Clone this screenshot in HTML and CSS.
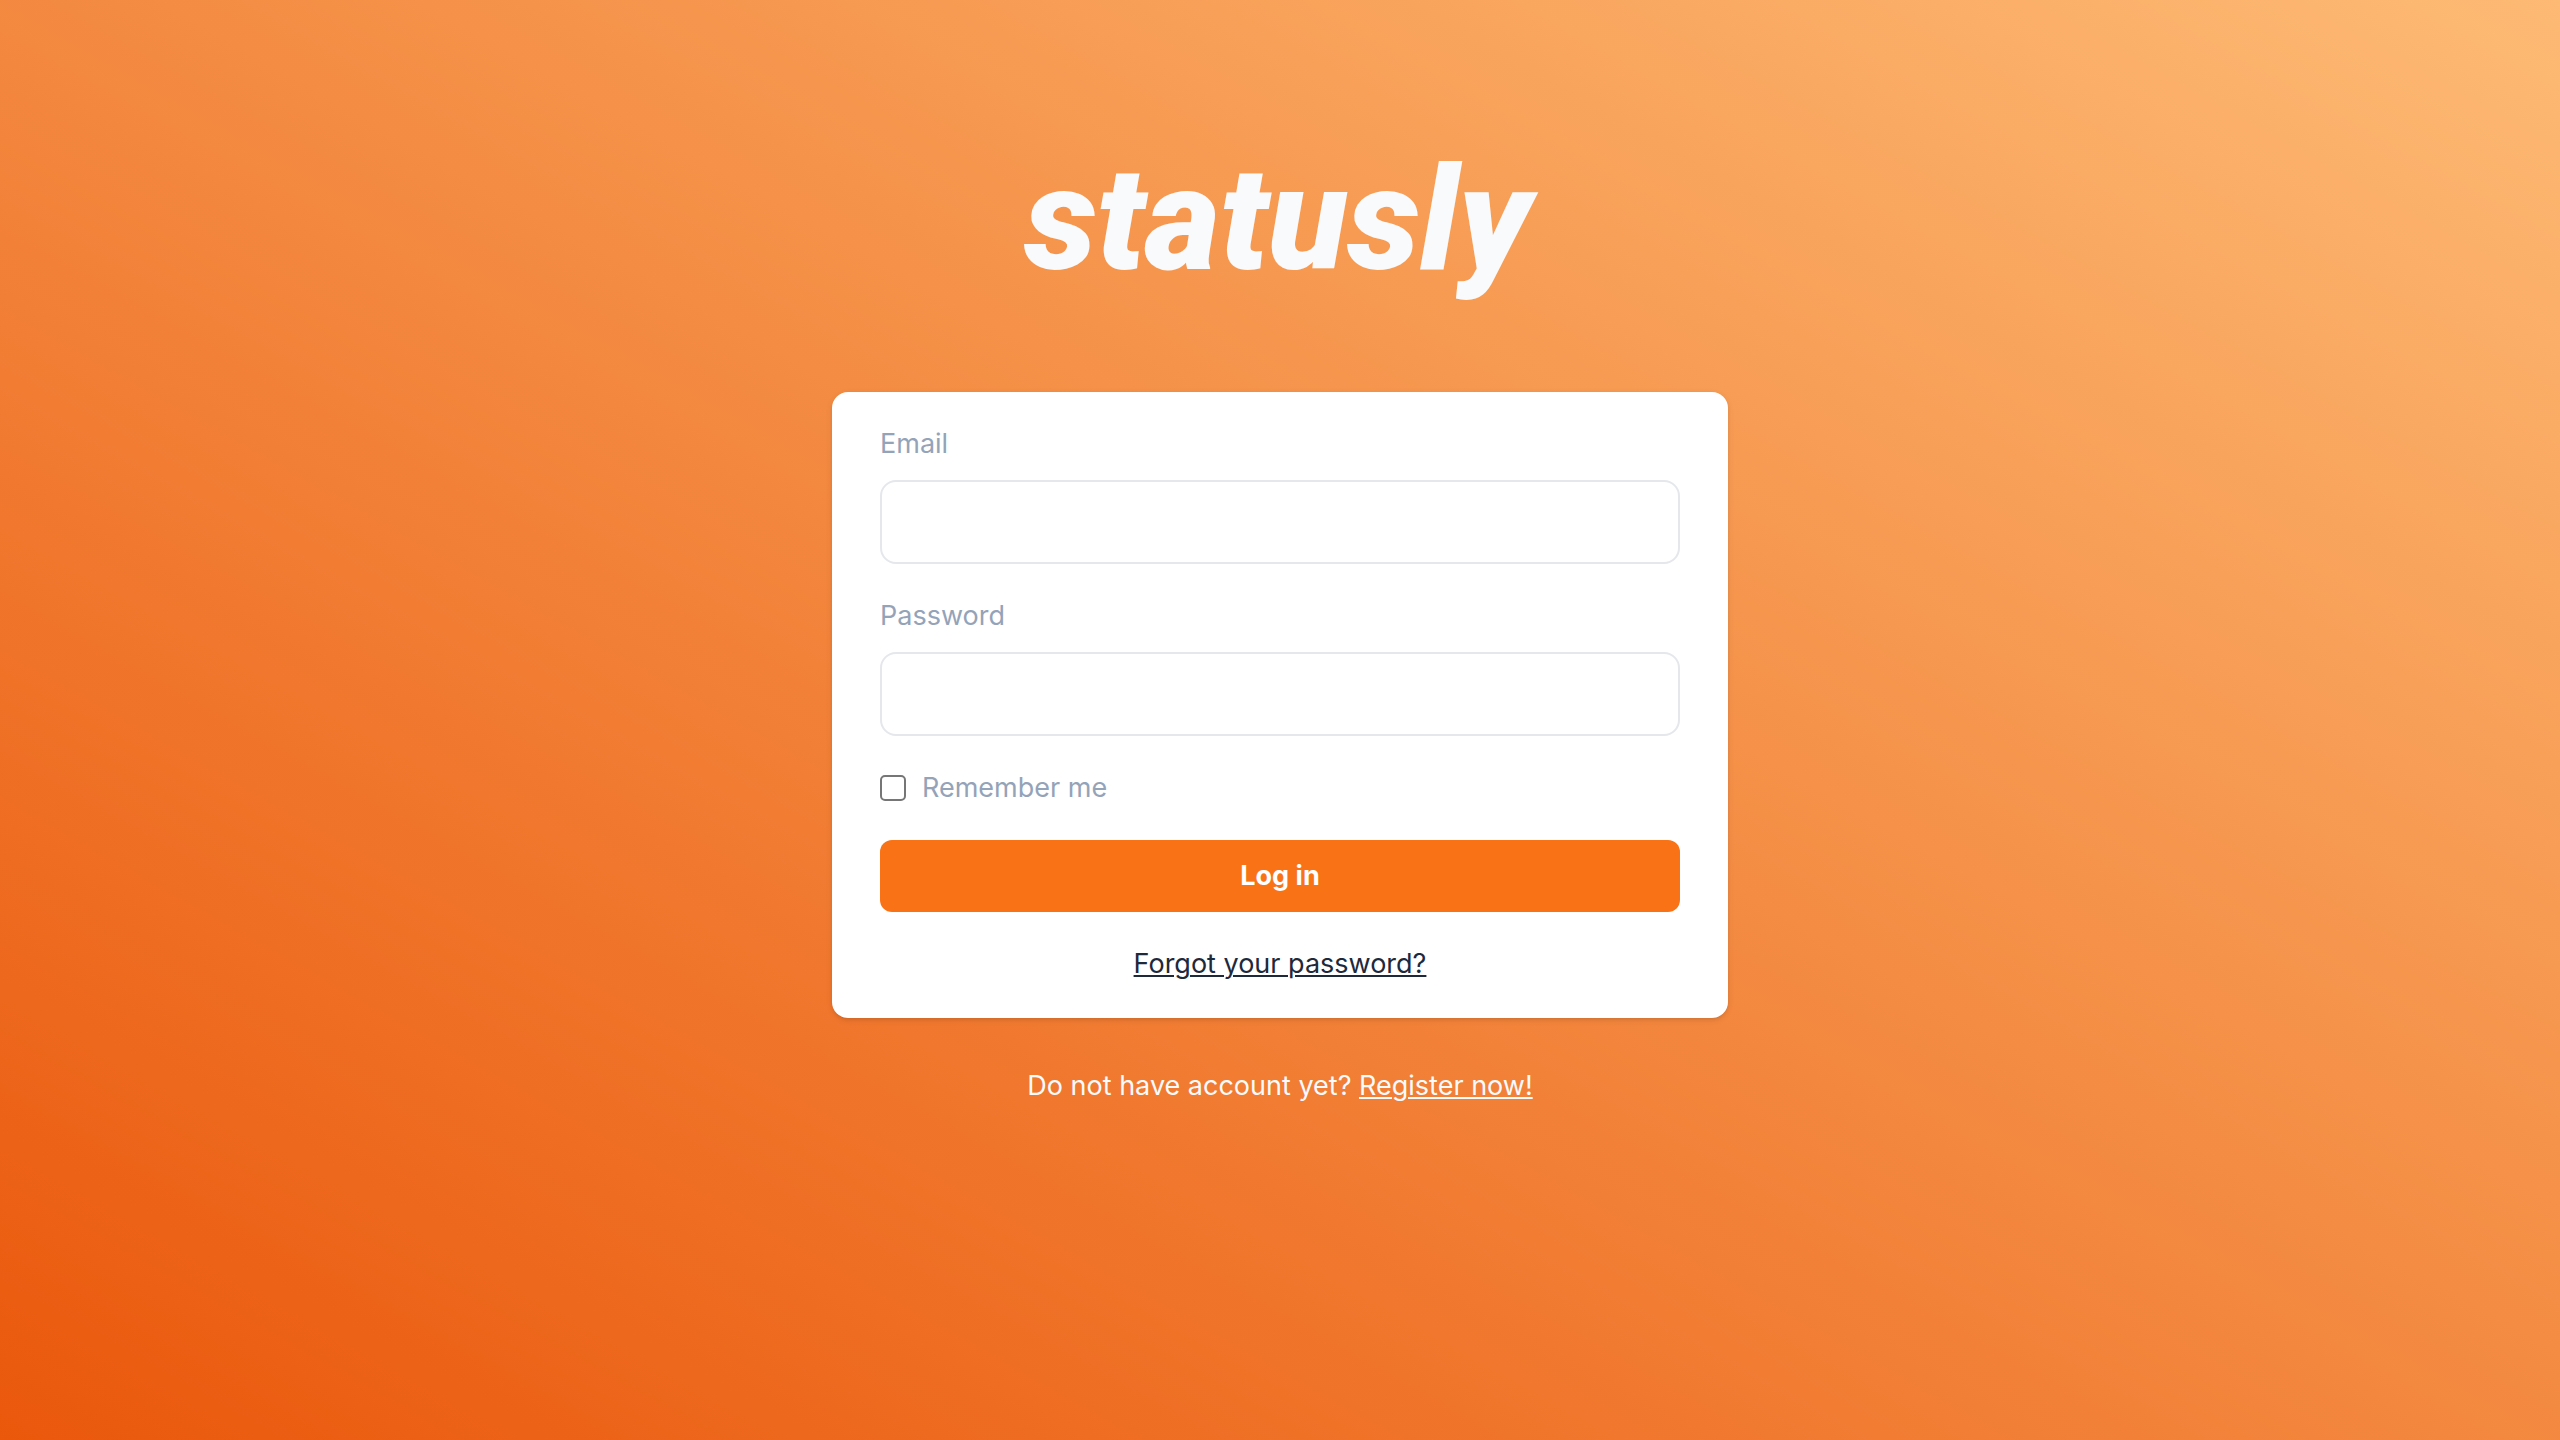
FILE: index.html
```html
<!DOCTYPE html>
<html lang="en">
<head>
  <meta charset="utf-8">
  <meta name="viewport" content="width=device-width, initial-scale=1">
  <title>Log in - statusly</title>
  <link rel="stylesheet" href="styles.css">
</head>
<body>
  <main class="page">
    <svg class="logo" viewBox="0 0 520 140" role="img" aria-label="statusly">
      <text class="logo-text" x="258" y="109" text-anchor="middle">statusly</text>
    </svg>

    <form class="card">
      <div class="field">
        <label for="email">Email</label>
        <input class="input" id="email" name="email" type="email">
      </div>
      <div class="field">
        <label for="password">Password</label>
        <input class="input" id="password" name="password" type="password">
      </div>
      <div class="remember">
        <input class="checkbox" id="remember" name="remember" type="checkbox">
        <label for="remember">Remember me</label>
      </div>
      <button class="button" type="submit">Log in</button>
      <a class="forgot" href="#forgot">Forgot your password?</a>
    </form>

    <p class="register">Do not have account yet? <a href="#register">Register now!</a></p>
  </main>
</body>
</html>
```

FILE: styles.css
```css
* {
  box-sizing: border-box;
}

body {
  margin: 0;
  font-family: Inter, "Liberation Sans", sans-serif;
  font-size: 27px;
  line-height: 40px;
}

.page {
  display: flex;
  flex-direction: column;
  align-items: center;
  min-height: 100vh;
  padding: 160px 32px 48px;
  background: linear-gradient(to top right, #ea580c, #fdba74);
}

.logo {
  width: 520px;
  max-width: 100%;
  margin-bottom: 92px;
  overflow: visible;
}

.logo-text {
  font-family: Roboto, "Liberation Sans", sans-serif;
  font-size: 145px;
  font-style: italic;
  font-weight: 900;
  fill: #f8fafc;
}

.card {
  display: flex;
  flex-direction: column;
  gap: 32px;
  width: 100%;
  max-width: 896px;
  padding: 32px 48px 34px;
  border-radius: 16px;
  background: #fff;
  color: #94a3b8;
  box-shadow: 0 2px 6px rgb(0 0 0 / 10%), 0 2px 4px -2px rgb(0 0 0 / 10%);
}

.field {
  display: flex;
  flex-direction: column;
  gap: 16px;
}

.input {
  width: 100%;
  height: 84px;
  padding: 16px 24px;
  border: 2px solid #e5e7eb;
  border-radius: 16px;
  background: #fff;
  color: #1e293b;
  font: inherit;
}

.remember {
  display: flex;
  align-items: center;
  gap: 16px;
}

.checkbox {
  appearance: none;
  width: 26px;
  height: 26px;
  margin: 0;
  border: 2px solid #767676;
  border-radius: 5px;
  background: #fff;
}

.checkbox:checked {
  background: #f97316;
}

.button {
  height: 72px;
  border: 0;
  border-radius: 12px;
  background: #f97316;
  color: #fff;
  font: inherit;
  font-weight: 700;
  cursor: pointer;
}

.forgot {
  align-self: center;
  color: #1e293b;
  text-decoration-thickness: 2px;
  text-underline-offset: 2px;
}

.register {
  margin: 48px 0 0;
  color: #f8fafc;
}

.register a {
  color: inherit;
  text-decoration-thickness: 2px;
  text-underline-offset: 2px;
}
```
